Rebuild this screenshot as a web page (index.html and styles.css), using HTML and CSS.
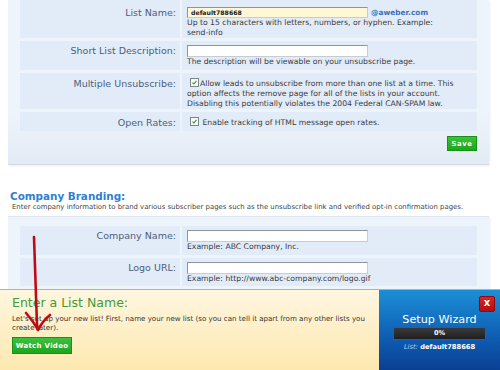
FILE: index.html
```html
<!DOCTYPE html>
<html lang="en">

<head>
  <meta charset="UTF-8" />
  <title>List Settings</title>
  <link rel="stylesheet" href="styles.css">
</head>

<body>
  <!-- List settings -->
  <div class="panel panel-top">
    <div class="row first">
      <div class="label">List Name:</div>
      <div class="value">
        <div class="name-line">
          <span class="field field-name">default788668</span><span class="domain">@aweber.com</span>
        </div>
        <div class="help">Up to 15 characters with letters, numbers, or hyphen. Example:<br>send-info</div>
      </div>
    </div>
    <div class="row">
      <div class="label">Short List Description:</div>
      <div class="value">
        <span class="field"></span>
        <div class="help">The description will be viewable on your unsubscribe page.</div>
      </div>
    </div>
    <div class="row tall">
      <div class="label">Multiple Unsubscribe:</div>
      <div class="value">
        <div class="help"><span class="check"><svg viewBox="0 0 9 9"><path d="M2 4.6 L3.8 6.4 L7 2.4" /></svg></span>Allow leads to unsubscribe from more than one list at a time. This option affects the remove page for all of the lists in your account. Disabling this potentially violates the 2004 Federal CAN-SPAM law.</div>
      </div>
    </div>
    <div class="row tall last">
      <div class="label">Open Rates:</div>
      <div class="value">
        <div class="help"><span class="check"><svg viewBox="0 0 9 9"><path d="M2 4.6 L3.8 6.4 L7 2.4" /></svg></span> Enable tracking of HTML message open rates.</div>
      </div>
    </div>
    <div class="actions">
      <button class="btn btn-save">Save</button>
    </div>
  </div>

  <!-- Company branding -->
  <h2 class="section-title">Company Branding:</h2>
  <p class="section-note">Enter company information to brand various subscriber pages such as the unsubscribe link and verified opt-in confirmation pages.</p>
  <div class="panel panel-brand">
    <div class="row">
      <div class="label">Company Name:</div>
      <div class="value">
        <span class="field"></span>
        <div class="help">Example: ABC Company, Inc.</div>
      </div>
    </div>
    <div class="row">
      <div class="label">Logo URL:</div>
      <div class="value">
        <span class="field"></span>
        <div class="help">Example: http://www.abc-company.com/logo.gif</div>
      </div>
    </div>
    <!-- next row sits under the wizard -->
    <div class="row row-hidden">
      <div class="label"></div>
      <div class="value"></div>
    </div>
  </div>

  <!-- Setup wizard popup -->
  <div class="wizard">
    <div class="wizard-intro">
      <h3>Enter a List Name:</h3>
      <p>Let's set up your new list! First, name your new list (so you can tell it apart from any other lists you create later).</p>
      <button class="btn btn-video">Watch Video</button>
    </div>
    <div class="wizard-side">
      <span class="close">x</span>
      <div class="wizard-title">Setup Wizard</div>
      <div class="progress">0%</div>
      <div class="wizard-list"><em>List:</em> default788668</div>
    </div>
  </div>

  <!-- hand drawn arrow -->
  <svg class="arrow" width="60" height="110" viewBox="0 0 60 110">
    <path d="M33 4 C34 30 35 60 36 92 L37 97" />
    <path d="M25 80 C30 86 34 91 37 97 C40 91 44 86 49 82" />
  </svg>
</body>

</html>
```

FILE: styles.css
```css
/* base */
body {
  margin: 0;
  font-family: 'DejaVu Sans', Verdana, sans-serif;
  background-color: #ffffff;
  color: #333;
  width: 500px;
  height: 370px;
  overflow: hidden;
  position: relative;
}

/* panels */
.panel {
  margin-left: 8px;
  width: 457px;
  padding: 0 12px 13px;
  background: linear-gradient(#eef4fb 70%, #e2eaf3);
  border-bottom: 1px solid #d3dce6;
  box-shadow: 1px 1px 2px rgba(0, 0, 0, 0.08);
}

.panel-brand {
  padding-top: 9px;
  border-top: 1px solid #dde6f0;
}

/* rows */
.row {
  display: grid;
  grid-template-columns: 160px 1fr;
  column-gap: 2px;
  margin-bottom: 3px;
}

.row .label,
.row .value {
  background-color: #e2ecf8;
  padding-top: 4px;
  padding-bottom: 2px;
}

.row.first .label,
.row.first .value {
  padding-top: 7px;
  padding-bottom: 0;
}

.row.tall .label,
.row.tall .value {
  padding-top: 5px;
  padding-bottom: 0;
}

.row.last .label,
.row.last .value {
  padding-bottom: 3px;
}

.row-hidden {
  height: 30px;
}

.label {
  text-align: right;
  padding-right: 4px;
  font-size: 9.5px;
  line-height: 11px;
  color: #4d5e7e;
}

.value {
  padding-left: 5px;
}

.name-line {
  display: flex;
  align-items: center;
  height: 11px;
}

.field {
  display: block;
  box-sizing: border-box;
  width: 181px;
  height: 12px;
  background-color: #fff;
  border: 1px solid #8e959c;
  border-right-color: #c8ccd0;
  border-bottom-color: #c8ccd0;
  font-size: 6.2px;
  font-weight: bold;
  line-height: 9px;
  padding-left: 3px;
  color: #222;
}

.field-name {
  background-color: #fff7d6;
  height: 11px;
}

.domain {
  margin-left: 3px;
  font-size: 7.4px;
  font-weight: bold;
  color: #3d6fb6;
}

.help {
  font-size: 7.7px;
  line-height: 10.2px;
  color: #3a3a3a;
  padding-right: 8px;
}

.check {
  display: inline-block;
  vertical-align: -1px;
  box-sizing: border-box;
  width: 9px;
  height: 9px;
  margin: 0 1px 0 3px;
  border: 1px solid #7c848c;
  background-color: #f6f9f6;
}

.check svg {
  display: block;
  width: 7px;
  height: 7px;
}

.check path {
  fill: none;
  stroke: #2b9a2b;
  stroke-width: 1.4;
}

/* buttons */
.actions {
  display: flex;
  justify-content: flex-end;
  padding-top: 2px;
}

.btn {
  display: block;
  font-family: 'DejaVu Sans', Verdana, sans-serif;
  font-weight: bold;
  color: #fff;
  background: linear-gradient(#3cc23c, #1ea51e);
  border: 1px solid #179217;
  padding: 0;
  cursor: pointer;
}

.btn-save {
  width: 30px;
  height: 15px;
  font-size: 6.8px;
  letter-spacing: 0.6px;
}

/* company branding */
.section-title {
  margin: 25px 0 0 10px;
  font-size: 10.4px;
  line-height: 13px;
  color: #2f80d2;
}

.section-note {
  margin: 0 0 4px 12px;
  font-size: 6.9px;
  line-height: 9px;
  color: #444;
}

/* wizard popup */
.wizard {
  position: absolute;
  left: 0;
  top: 289px;
  width: 500px;
  height: 81px;
  display: flex;
  border-top: 1px solid #a9b1b9;
}

.wizard-intro {
  width: 367px;
  padding: 4px 0 0 12px;
  background: linear-gradient(#fff6e0, #fde8ae);
}

.wizard-intro h3 {
  margin: 0;
  font-weight: normal;
  font-size: 12.5px;
  line-height: 18px;
  color: #3f9b36;
}

.wizard-intro p {
  margin: 3px 0 5px;
  font-size: 7.1px;
  line-height: 8.5px;
  color: #333;
  width: 362px;
}

.btn-video {
  width: 60px;
  height: 17px;
  font-size: 7px;
  letter-spacing: 0.3px;
}

.wizard-side {
  position: relative;
  flex: 1;
  background: linear-gradient(#1c8fd6, #0e5cb2 60%, #0a3f93);
  text-align: center;
  padding-top: 23px;
}

.close {
  position: absolute;
  right: 5px;
  top: 6px;
  width: 14px;
  height: 14px;
  background: linear-gradient(#e02020, #b40f0f);
  border: 1px solid #8c0c0c;
  border-radius: 2px;
  color: #fff;
  font-size: 10px;
  font-weight: bold;
  line-height: 12px;
}

.wizard-title {
  font-size: 11.2px;
  line-height: 14px;
  color: #fff;
}

.progress {
  margin: 0 auto;
  width: 91px;
  height: 11px;
  background: linear-gradient(#3a3a3a, #1e1e1e);
  border: 1px solid #555;
  color: #fff;
  font-size: 6.6px;
  font-weight: bold;
  line-height: 11px;
}

.wizard-list {
  margin-top: 2px;
  font-size: 6.7px;
  font-weight: bold;
  line-height: 11px;
  color: #fff;
}

.wizard-list em {
  font-weight: normal;
  color: #a9d4f7;
}

/* annotation arrow over the page */
.arrow {
  position: absolute;
  left: 1px;
  top: 233px;
}

.arrow path {
  fill: none;
  stroke: #c10b14;
  stroke-width: 2.6;
  stroke-linecap: round;
  stroke-linejoin: round;
}
```
